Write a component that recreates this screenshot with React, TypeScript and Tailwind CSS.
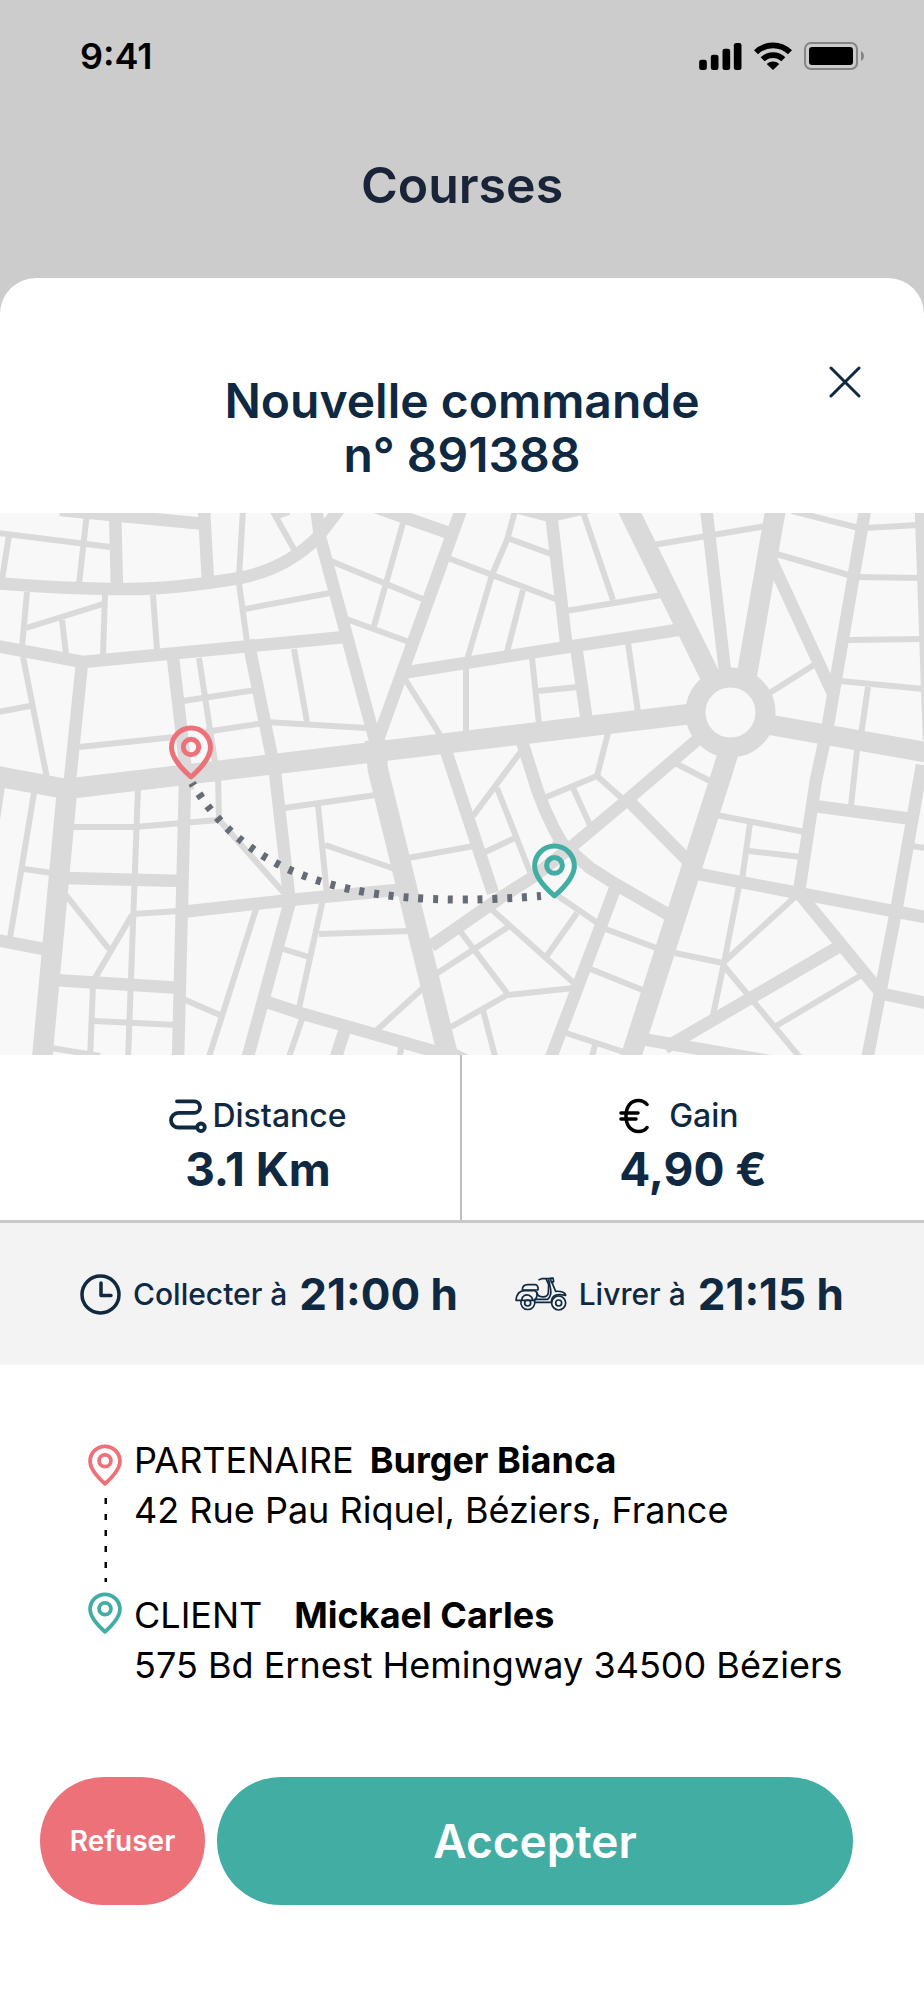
import React from 'react';

const WIDE_ROADS = [
  'M-4 776L66 789L300 761L690 714',
  'M68 780L42 1060',
  'M375 740L378 770L449 1060',
  'M627 507L712 680',
  'M776 507L746 680',
  'M765 724L930 753',
  'M732 740L723 770L628 1066',
];

const ROADS = [
  'M60 510L205 524',
  'M115 510L117 588',
  'M204 510L208 582',
  'M-5 583Q70 589 130 589C170 589 210 583 240 578C275 571 300 555 318 537L340 508',
  'M-3 646L83 662L345 637',
  'M82 663L70 780',
  'M173 658L181 727L188 790',
  'M248 640L275 772',
  'M316 507L320 537L375 740',
  'M461 510L377 742',
  'M372 506L449 533',
  'M402 673L567 647L620 639L684 629',
  'M576 646L587 722',
  'M515 507L550 516L590 507',
  'M551 513L567 650',
  'M444 745L493 893',
  'M519 732L531 770Q543 812 563 845',
  'M706 507L726 680',
  'M768 553L834 696',
  'M865 510L828 725L816 780L799 892',
  'M921 510L929 740',
  'M922 765L897 906L867 1060',
  'M431 946L500 898L533 877L570 848L620 806L704 734',
  'M-3 940L54 951',
  'M64 878L183 881',
  'M185 783L178 1060',
  'M54 980L182 988',
  'M275 772L289 895L289 905L247 1060',
  'M181 912L300 899L408 889',
  'M264 1001L300 1013L444 1054',
  'M346 1026L335 1060',
  'M556 838L590 868L617 885L676 919',
  'M616 886L550 1060',
  'M625 797L694 867',
  'M688 872L798 893L930 918',
  'M798 892L881 993',
  'M845 943L665 1048',
  'M636 1038L775 1062',
  'M874 992L930 1004',
  'M814 806L912 819',
];

const LANES = [
  'M-2 533L110 547', 'M87 513L79 584', 'M9 535L2 580', 'M27 592L22 647', 'M23 657L47 778',
  'M-2 712L30 706', 'M26 628L103 604', 'M62 620L66 654', 'M105 595L103 655', 'M153 595L157 650',
  'M243 510L239 577', 'M239 583L247 642', 'M272 510L295 551', 'M278 516L289 512', 'M245 609L330 593',
  'M79 747L175 737', 'M199 658L215 762', 'M183 701L256 690', 'M205 732L264 723', 'M266 722L366 728',
  'M294 649L307 722', 'M403 523L374 626', 'M326 559L425 600', 'M341 617L409 642', 'M403 676L442 738',
  'M466 668L466 734', 'M532 658L539 724', 'M538 691L578 687', 'M467 660L492 575L507 540L515 511',
  'M448 558L558 600', 'M523 590L507 652', 'M510 539L551 554', 'M583 512L613 600', 'M566 611L662 595',
  'M522 750L473 816', 'M608 733L597 776', 'M544 798L597 776L625 801', 'M653 545L766 526',
  'M628 643L638 712', 'M792 511L859 528', 'M773 553L852 576', 'M768 694L817 663', 'M865 528L918 525',
  'M856 577L920 578', 'M848 640L923 639', 'M840 681L925 689', 'M868 687L861 735', 'M857 750L851 806',
  'M675 763L712 782', 'M2 786L-3 820', 'M34 793L10 938', 'M24 869L52 873', 'M51 1048L100 1056',
  'M73 827L135 827L218 820', 'M138 788L128 1060', 'M65 894L109 949', 'M132 915L95 978',
  'M133 914L179 911', 'M93 985L90 1060', 'M94 1021L178 1025', 'M183 999L220 1015',
  'M218 776L219 820L284 893', 'M257 906L208 1060', 'M284 808L376 795', 'M283 949L309 957',
  'M303 1016L288 1060', 'M323 899L299 1008', 'M318 805L327 895', 'M325 845L395 869',
  'M319 934L410 931', 'M423 988L376 1031', 'M402 1043L399 1060', 'M408 858L474 846',
  'M497 788L530 872', 'M483 853L515 838', 'M573 788L590 825', 'M436 974L508 927',
  'M460 931L507 993', 'M451 1027L507 995L574 988', 'M483 1010L496 1060', 'M490 908L575 984',
  'M558 896L599 924', 'M577 913L546 957', 'M603 928L659 949', 'M588 968L645 991',
  'M563 1032L630 1054', 'M595 1045L591 1060', 'M456 1052L472 1060', 'M716 815L805 832',
  'M750 823L742 880', 'M739 886L724 963L712 1020', 'M749 851L802 857', 'M675 953L723 963',
  'M796 896L725 961', 'M724 966L802 1060', 'M860 976L776 1026', 'M911 846L926 848',
];

function Pin(props: React.SVGProps<SVGSVGElement>) {
  return (
    <svg viewBox="0 0 44 55" fill="none" stroke="currentColor" strokeWidth="5" {...props}>
      <path strokeLinejoin="round" d="M22 52C13 44 2.500 33.500 2.500 22.500a19.500 19.500 0 0 1 39 0C41.500 33.500 31 44 22 52Z" />
      <circle cx="22" cy="22" r="7.700" />
    </svg>
  );
}

function StatusIcons() {
  return (
    <div className="flex items-center gap-3">
      <svg width="43" height="27" viewBox="0 0 128 81">
        <rect y="50" width="23" height="31" rx="7" />
        <rect x="35" y="35" width="23" height="46" rx="7" />
        <rect x="70" y="17" width="23" height="64" rx="7" />
        <rect x="104" width="23" height="81" rx="7" />
      </svg>
      <svg width="38" height="28" viewBox="0 0 114 84" fill="none" stroke="black" strokeWidth="17">
        <path d="M6 31C34 3 80 3 108 31" />
        <path d="M26 52C43 35 71 35 88 52" />
        <path d="M57 84L38 66C49 56 65 56 76 66Z" fill="black" stroke="none" />
      </svg>
      <svg width="60" height="28" viewBox="0 0 60 28">
        <rect x="1" y="1" width="52" height="26" rx="6" fill="none" stroke="#858585" strokeWidth="2" />
        <rect x="5" y="5" width="44" height="18" rx="3" />
        <path d="M57 9C61 11 61 17 57 19Z" fill="#858585" />
      </svg>
    </div>
  );
}

function CityMap() {
  return (
    <svg
      className="block h-[542px] w-full"
      viewBox="0 513 924 542"
      preserveAspectRatio="xMidYMid slice"
      role="img"
      aria-label="Itinéraire"
    >
      <rect y="513" width="924" height="542" fill="#f8f8f8" />
      <g fill="none" stroke="#dadada" strokeLinejoin="round">
        {LANES.map((d) => <path key={d} d={d} strokeWidth="6" />)}
        {ROADS.map((d) => <path key={d} d={d} strokeWidth="12.500" />)}
        {WIDE_ROADS.map((d) => <path key={d} d={d} strokeWidth="20.500" />)}
      </g>
      <circle cx="730.500" cy="712.500" r="35" fill="#f8f8f8" stroke="#dadada" strokeWidth="20" />
      <path
        d="M192 783C240 863 330 914 541 896"
        fill="none"
        stroke="#666c76"
        strokeWidth="8"
        strokeDasharray="5 9.850"
        strokeDashoffset="2"
      />
      <Pin x="169" y="725" width="44" height="55" className="text-[#ed7179]" />
      <Pin x="532" y="843" width="45" height="56" className="text-[#41ada3]" />
    </svg>
  );
}

function DistanceIcon() {
  return (
    <svg width="39" height="34" viewBox="0 0 39 34" fill="none" stroke="currentColor" strokeWidth="3.800" strokeLinecap="round">
      <path d="M8 2.300H25.200a5.800 5.800 0 0 1 0 11.600H9.300a7.300 7.300 0 0 0 0 14.600H27" />
      <circle cx="32" cy="28.300" r="3.800" />
    </svg>
  );
}

function EuroIcon() {
  return (
    <svg width="30" height="36" viewBox="0 0 30 36" fill="none" stroke="black" strokeWidth="3.500" strokeLinecap="round">
      <path d="M28 6.500C25.500 3.500 22.500 2.500 19.500 2.500C11.500 2.500 7 9 7 18s4.500 15.500 12.500 15.500c3.500 0 6.500-1.200 8.500-4" />
      <path d="M2 15H19M2 21H17" />
    </svg>
  );
}

function ClockIcon() {
  return (
    <svg width="41" height="41" viewBox="0 0 41 41" fill="none" stroke="currentColor" strokeWidth="3.500" strokeLinecap="round" strokeLinejoin="round">
      <circle cx="20.500" cy="20.500" r="18.500" />
      <path d="M21 9V21.500H31" />
    </svg>
  );
}

function ScooterIcon() {
  return (
    <svg width="52" height="34" viewBox="38 25 156 102" fill="none" stroke="currentColor" strokeWidth="5" strokeLinecap="round" strokeLinejoin="round">
      <path d="M56 97a21 21 0 1 0 41 0" />
      <circle cx="76" cy="103" r="9" />
      <circle cx="169" cy="103" r="21" />
      <circle cx="169" cy="103" r="9" />
      <path d="M41 95C43 74 53 66 67 66H98C106 70 107 84 97 95Z" />
      <path d="M58 94C60 80 70 76 80 80C88 84 91 90 91 95" />
      <path d="M60 64C60 53 67 48 76 48H98C106 48 108 56 107 64Z" />
      <path d="M98 101H147C148 82 160 73 190 80C190 72 178 67 160 68L149 42" />
      <path d="M104 72C106 88 136 90 138 72L139 48L132 32" />
      <path d="M98 92H136C143 86 147 76 145 62L139 34" />
      <path d="M110 33L118 30H146" />
      <path d="M144 29L152 28L154 39L147 41Z" />
    </svg>
  );
}

export default function App() {
  return (
    <div className="flex min-h-screen flex-col bg-[#ccc] font-['Inter',sans-serif]">
      <header className="pb-[63px]">
        <div className="flex items-center justify-between pt-8 pr-[60px] pl-20">
          <time className="text-[36px] leading-12 font-semibold text-black">9:41</time>
          <StatusIcons />
        </div>
        <h1 className="mt-[75px] text-center text-[50px] leading-[60px] font-semibold text-[#1a2438]">Courses</h1>
      </header>

      <main className="flex-1 rounded-t-[36px] bg-white text-[#102942]">
        <div className="grid grid-cols-[1fr_auto_1fr] px-[63px] pt-[88px] pb-[31px]">
          <h2 className="col-start-2 pt-2 text-center text-[48px] leading-[54px] font-semibold">
            Nouvelle commande<br />n° 891388
          </h2>
          <button type="button" aria-label="Fermer" className="h-8 w-8 justify-self-end">
            <svg viewBox="0 0 32 32" stroke="currentColor" strokeWidth="3" strokeLinecap="round">
              <path d="M2 2L30 30M30 2L2 30" />
            </svg>
          </button>
        </div>

        <CityMap />

        <section className="grid grid-cols-2 border-b-3 border-[#c8c8c8]">
          <div className="flex flex-col items-center border-r-2 border-[#bdbdbd] pt-[43px] pb-6 pl-14">
            <div className="flex items-center gap-1 text-[32px] leading-9 font-medium">
              <DistanceIcon />
              <span>Distance</span>
            </div>
            <strong className="mt-2 text-[46px] leading-[54px] font-bold">3.1 Km</strong>
          </div>
          <div className="flex justify-center pt-[43px] pb-6">
            <div>
              <div className="flex items-center gap-5 text-[32px] leading-9 font-medium">
                <EuroIcon />
                <span>Gain</span>
              </div>
              <strong className="mt-2 block text-[46px] leading-[54px] font-bold">4,90 €</strong>
            </div>
          </div>
        </section>

        <section className="flex items-center justify-between bg-[#f3f3f3] px-20 py-11">
          <div className="flex items-center gap-3">
            <ClockIcon />
            <span className="text-[30px] leading-9 font-medium">Collecter à</span>
            <strong className="text-[44px] leading-[54px] font-bold">21:00 h</strong>
          </div>
          <div className="flex items-center gap-3">
            <ScooterIcon />
            <span className="text-[30px] leading-9 font-medium">Livrer à</span>
            <strong className="text-[44px] leading-[54px] font-bold">21:15 h</strong>
          </div>
        </section>

        <ol className="px-[88px] pt-[70px] text-[36px] leading-[50px] text-black">
          <li className="flex gap-3">
            <div className="flex flex-col items-center pt-[9px]">
              <Pin width="34" height="42" className="text-[#ed7179]" />
              <svg className="mt-3" width="3" height="84" stroke="black" strokeWidth="3" strokeDasharray="6 10">
                <path d="M2 0V84" />
              </svg>
            </div>
            <div>
              <p className="flex gap-4">PARTENAIRE <strong className="font-bold">Burger Bianca</strong></p>
              <p>42 Rue Pau Riquel, Béziers, France</p>
            </div>
          </li>
          <li className="mt-2 flex gap-3">
            <div className="pt-[2px]">
              <Pin width="34" height="42" className="text-[#41ada3]" />
            </div>
            <div>
              <p className="flex gap-8">CLIENT <strong className="font-bold">Mickael Carles</strong></p>
              <p className="whitespace-nowrap">575 Bd Ernest Hemingway 34500 Béziers</p>
            </div>
          </li>
        </ol>

        <div className="flex gap-3 pt-[87px] pr-[71px] pb-[95px] pl-10 font-semibold text-white">
          <button type="button" className="h-32 w-[165px] rounded-full bg-[#ed7179] text-[28px]">Refuser</button>
          <button type="button" className="h-32 flex-1 rounded-full bg-[#41ada3] text-[46px]">Accepter</button>
        </div>
      </main>
    </div>
  );
}
